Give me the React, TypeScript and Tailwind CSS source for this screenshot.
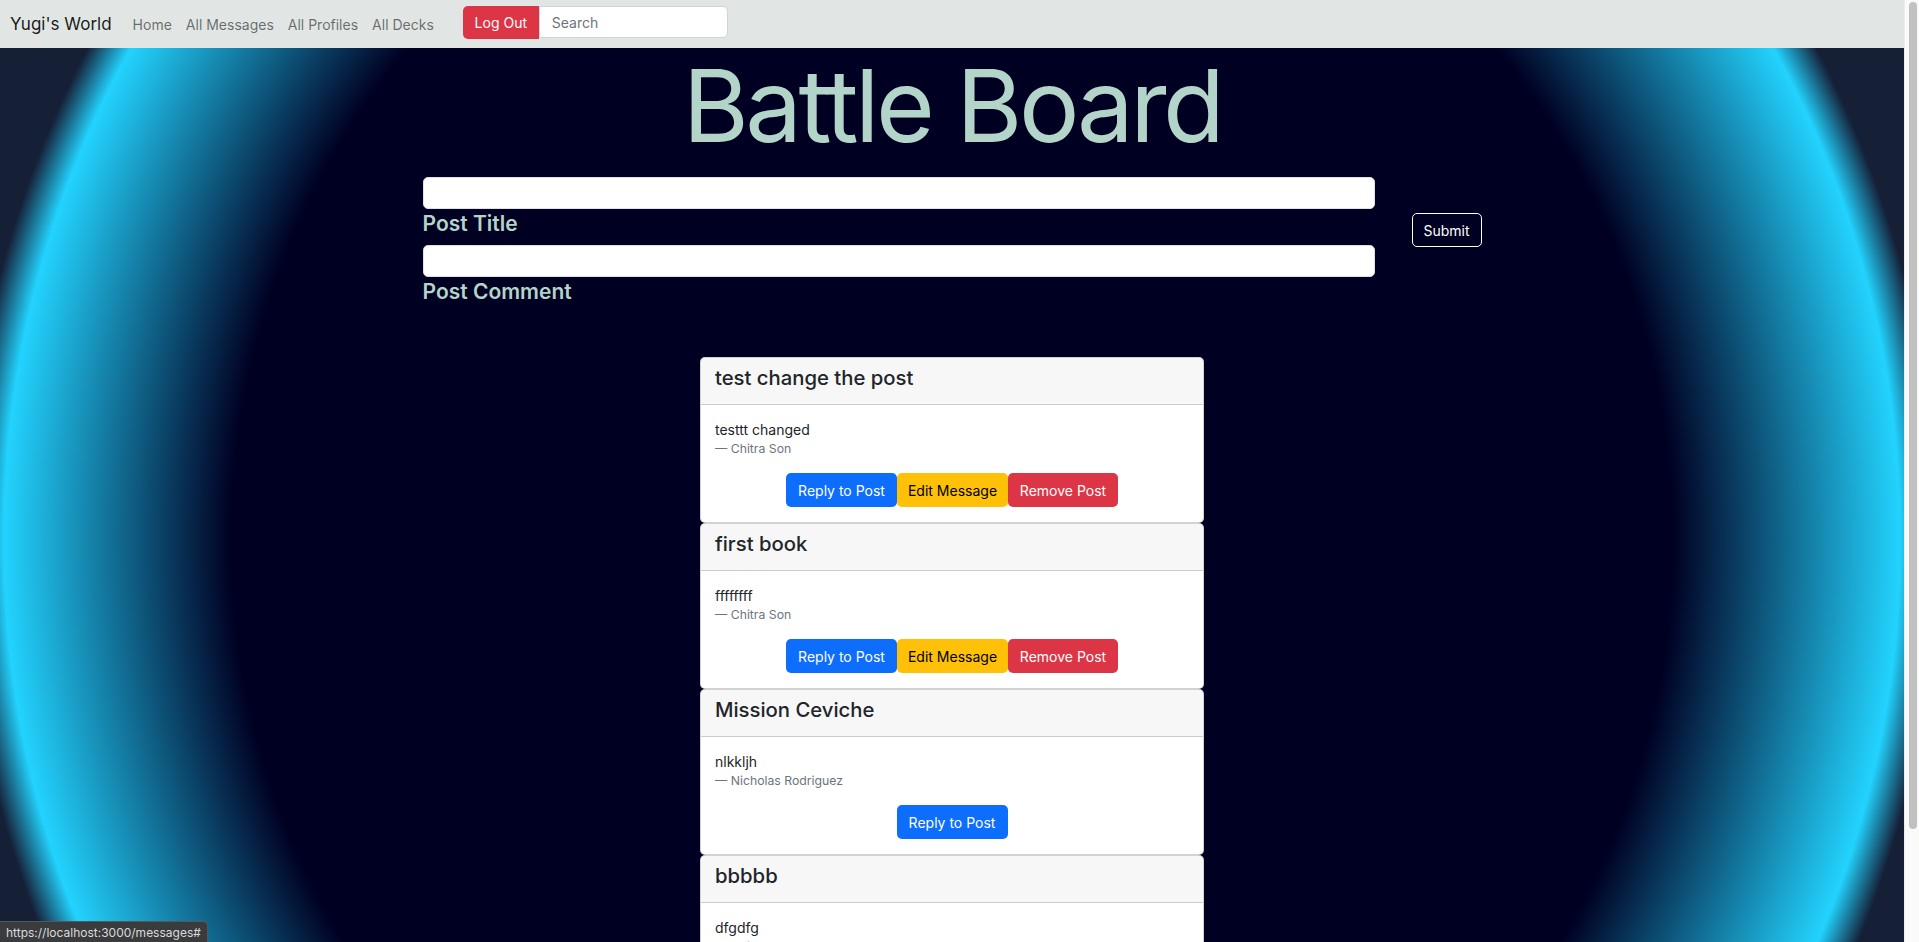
import { Fragment } from "react";

type Post = {
  title: string;
  body: string;
  author: string;
  own: boolean;
};

const POSTS: Post[] = [
  { title: "test change the post", body: "testtt changed", author: "Chitra Son", own: true },
  { title: "first book", body: "ffffffff", author: "Chitra Son", own: true },
  { title: "Mission Ceviche", body: "nlkkljh", author: "Nicholas Rodriguez", own: false },
  { title: "bbbbb", body: "dfgdfg", author: "Chitra Son", own: true },
];

const NAV_LINKS = ["Home", "All Messages", "All Profiles", "All Decks"];

function Navbar() {
  return (
    <nav className="relative z-10 flex h-[48px] shrink-0 items-center bg-[#e1e6e4] pl-[10px]">
      <a href="#" className="mr-[14px] text-[17px] leading-[26px] text-black/90">
        Yugi's World
      </a>
      <ul className="flex items-center">
        {NAV_LINKS.map((link) => (
          <li key={link}>
            <a href="#" className="block px-[7px] text-[14px] leading-[21px] text-black/55">
              {link}
            </a>
          </li>
        ))}
      </ul>
      <div className="-mt-[3px] ml-[22px] flex">
        <button className="h-[33px] w-[76px] rounded-l-[5px] bg-[#dc3545] text-[14px] text-white">
          Log Out
        </button>
        <input
          placeholder="Search"
          className="h-[32px] w-[189px] rounded-r-[5px] border border-[#ced4da] bg-white px-[12px] text-[14px] text-[#212529] placeholder:text-[#6c757d] focus:outline-none"
        />
      </div>
    </nav>
  );
}

function PostForm() {
  return (
    <form className="mx-auto mt-[11px] flex w-[1059px] items-start">
      <div className="flex w-[952px] flex-col">
        <input className="h-[32px] rounded-[5px] border border-[#dee2e6] bg-white px-3 text-[14px]" />
        <label className="mt-[2px] mb-[9px] text-[21px] leading-[25px] font-semibold text-[#b3d4c9]">
          Post Title
        </label>
        <input className="h-[32px] rounded-[5px] border border-[#dee2e6] bg-white px-3 text-[14px]" />
        <label className="mt-[2px] text-[21px] leading-[25px] font-semibold text-[#b3d4c9]">
          Post Comment
        </label>
      </div>
      <button
        type="button"
        className="mt-[36px] ml-[37px] h-[34px] w-[70px] rounded-[5px] border border-white text-[14px] text-white"
      >
        Submit
      </button>
    </form>
  );
}

function PostCard({ post }: { post: Post }) {
  return (
    <div className="w-[504px] rounded-[5px] border border-black/[0.175] bg-white">
      <div className="rounded-t-[4px] border-b border-black/[0.175] bg-black/[0.03] px-[14px] pt-[7px] pb-[7px]">
        <h4 className="mb-[7px] text-[20.3px] leading-[25px] font-medium text-[#212529]">{post.title}</h4>
      </div>
      <div className="px-[14px] pt-[15px] pb-[15px]">
        <p className="text-[14px] leading-[20px] text-[#212529]">{post.body}</p>
        <footer className="text-[12.25px] leading-[18px] text-[#6c757d]">— {post.author}</footer>
        <div className="mt-[15px] flex justify-center">
          <button className="h-[34px] w-[111px] rounded-[5px] bg-[#0d6efd] text-[14px] text-white">
            Reply to Post
          </button>
          {post.own && (
            <Fragment>
              <button className="h-[34px] w-[111px] rounded-[5px] bg-[#ffc107] text-[14px] text-black">
                Edit Message
              </button>
              <button className="h-[34px] w-[110px] rounded-[5px] bg-[#dc3545] text-[14px] text-white">
                Remove Post
              </button>
            </Fragment>
          )}
        </div>
      </div>
    </div>
  );
}

export default function App() {
  return (
    <div className="flex h-[942px] w-full overflow-hidden font-[Inter,sans-serif]">
      <div className="relative flex min-w-0 flex-1 flex-col">
        <Navbar />
        {/* page body with the glowing ring */}
        <main className="flex-1 bg-[radial-gradient(ellipse_948px_984px_at_50%_492px,#000022_76%,#22d3fe_100%,#151f36_104%)]">
          <h1 className="-mt-[4px] text-center text-[101px] leading-[122px] font-normal tracking-[-3.5px] text-[#b3d4c9]">
            Battle Board
          </h1>
          <PostForm />
          <div className="mt-[53px] flex flex-col items-center">
            {POSTS.map((post) => (
              <PostCard key={post.title} post={post} />
            ))}
          </div>
        </main>
        {/* browser status bubble */}
        <div className="absolute bottom-0 left-0 z-10 h-[21px] rounded-tr-[5px] border-t border-r border-[#55575a] bg-[#3a3b3d] px-[6px] text-[12px] leading-[21px] text-[#d9dadc]">
          https://localhost:3000/messages#
        </div>
      </div>
      {/* scrollbar */}
      <div className="w-[15px] shrink-0 border-l border-[#ececec] bg-[#fafafa]">
        <div className="mt-[2px] ml-[4px] h-[827px] w-[8px] rounded-full bg-[#c1c1c1]" />
      </div>
    </div>
  );
}
